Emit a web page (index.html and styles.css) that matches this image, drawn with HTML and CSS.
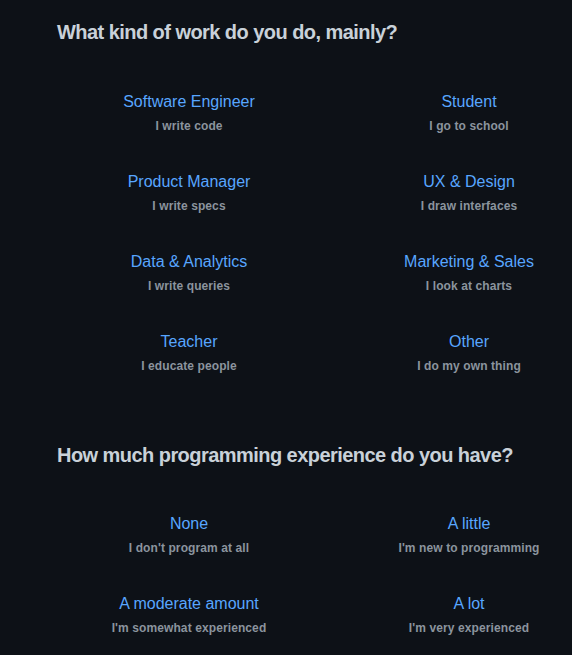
FILE: index.html
```html
<!DOCTYPE html>
<html>
<head>
<meta charset="utf-8">
<link rel="stylesheet" href="styles.css">
</head>
<body>
<main class="page">
  <section class="question">
    <h2 class="q-title">What kind of work do you do, mainly?</h2>
    <div class="options">
      <div class="option"><a class="opt-title">Software Engineer</a><div class="opt-sub">I write code</div></div>
      <div class="option"><a class="opt-title">Student</a><div class="opt-sub">I go to school</div></div>
      <div class="option"><a class="opt-title">Product Manager</a><div class="opt-sub">I write specs</div></div>
      <div class="option"><a class="opt-title">UX &amp; Design</a><div class="opt-sub">I draw interfaces</div></div>
      <div class="option"><a class="opt-title">Data &amp; Analytics</a><div class="opt-sub">I write queries</div></div>
      <div class="option"><a class="opt-title">Marketing &amp; Sales</a><div class="opt-sub">I look at charts</div></div>
      <div class="option"><a class="opt-title">Teacher</a><div class="opt-sub">I educate people</div></div>
      <div class="option"><a class="opt-title">Other</a><div class="opt-sub">I do my own thing</div></div>
    </div>
  </section>
  <section class="question second">
    <h2 class="q-title">How much programming experience do you have?</h2>
    <div class="options">
      <div class="option"><a class="opt-title">None</a><div class="opt-sub">I don't program at all</div></div>
      <div class="option"><a class="opt-title">A little</a><div class="opt-sub">I'm new to programming</div></div>
      <div class="option"><a class="opt-title">A moderate amount</a><div class="opt-sub">I'm somewhat experienced</div></div>
      <div class="option"><a class="opt-title">A lot</a><div class="opt-sub">I'm very experienced</div></div>
    </div>
  </section>
</main>
</body>
</html>
```

FILE: styles.css
```css
html, body {
  margin: 0;
  padding: 0;
  background: #0d1117;
  overflow: hidden;
}
body {
  font-family: "Liberation Sans", Arial, sans-serif;
  color: #c9d1d9;
}
.page {
  padding: 17px 0 0 57px;
}
.q-title {
  margin: 0;
  font-size: 20px;
  line-height: 30px;
  font-weight: 700;
  letter-spacing: -0.55px;
  color: #c9d1d9;
}
.options {
  display: grid;
  grid-template-columns: 264px 206px;
  column-gap: 45px;
  grid-auto-rows: 80px;
  margin-top: 30px;
}
.second {
  margin-top: 43px;
}
.second .options {
  margin-top: 29px;
}
.option {
  display: flex;
  flex-direction: column;
  align-items: center;
  padding-top: 13px;
}
.opt-title {
  font-size: 16px;
  line-height: 24px;
  color: #58a6ff;
  margin-bottom: 3px;
}
.opt-sub {
  font-size: 12px;
  line-height: 18px;
  font-weight: 700;
  color: #8b949e;
  letter-spacing: 0.1px;
}
```
